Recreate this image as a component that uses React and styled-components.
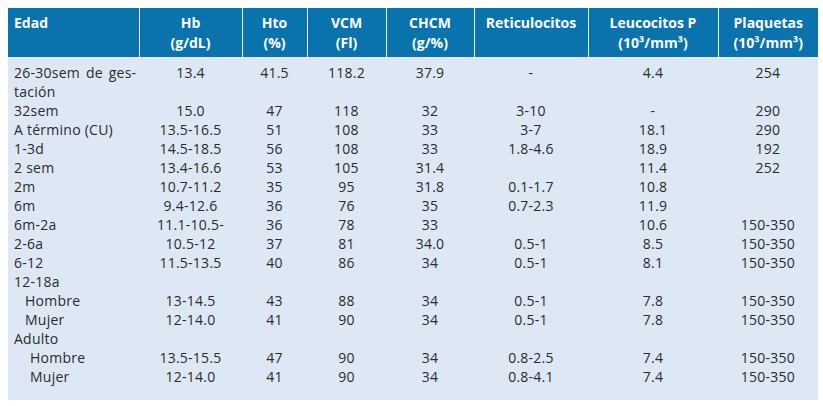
import React from "react";
import styled, { createGlobalStyle } from "styled-components";

const Global = createGlobalStyle`
  html, body { margin: 0; padding: 0; background: #ffffff; }
  body { padding: 8px 0 0 8px; font-family: "Open Sans", "DejaVu Sans", sans-serif; }
`;

const Table = styled.table`
  border-collapse: collapse;
  table-layout: fixed;
  width: 810px;
  background: #dde8f4;
  color: #2b2b2b;
  font-family: "Open Sans", "DejaVu Sans", sans-serif;
  font-size: 14px;
`;

const HeadCell = styled.th`
  background: #0a72ad;
  color: #ffffff;
  font-weight: 700;
  font-size: 14px;
  line-height: 20px;
  padding: 5px 6px 4px;
  text-align: ${(p) => (p.$left ? "left" : "center")};
  vertical-align: top;
  border-left: ${(p) => (p.$left ? "none" : "1px solid #e6eef6")};
`;

const Cell = styled.td`
  padding: 0 6px 0 ${(p) => 6 + (p.$indent || 0)}px;
  line-height: 19px;
  height: 19px;
  letter-spacing: 0.25px;
  text-align: ${(p) => (p.$left ? "left" : "center")};
  vertical-align: top;
  white-space: nowrap;
`;

const Row = styled.tr`
  & > td { padding-top: ${(p) => (p.$first ? 5.5 : 0)}px; padding-bottom: ${(p) => (p.$last ? 14.5 : 0)}px; }
`;

const Justified = styled.span`
  display: block;
  word-spacing: 2px;
`;

const widths = [131, 103, 65, 79, 88, 114, 130, 100];

const rows = [
  ["26-30sem de ges-|tación", "13.4", "41.5", "118.2", "37.9", "-", "4.4", "254"],
  ["32sem", "15.0", "47", "118", "32", "3-10", "-", "290"],
  ["A término (CU)", "13.5-16.5", "51", "108", "33", "3-7", "18.1", "290"],
  ["1-3d", "14.5-18.5", "56", "108", "33", "1.8-4.6", "18.9", "192"],
  ["2 sem", "13.4-16.6", "53", "105", "31.4", "", "11.4", "252"],
  ["2m", "10.7-11.2", "35", "95", "31.8", "0.1-1.7", "10.8", ""],
  ["6m", "9.4-12.6", "36", "76", "35", "0.7-2.3", "11.9", ""],
  ["6m-2a", "11.1-10.5-", "36", "78", "33", "", "10.6", "150-350"],
  ["2-6a", "10.5-12", "37", "81", "34.0", "0.5-1", "8.5", "150-350"],
  ["6-12", "11.5-13.5", "40", "86", "34", "0.5-1", "8.1", "150-350"],
  ["12-18a", "", "", "", "", "", "", ""],
  ["Hombre", "13-14.5", "43", "88", "34", "0.5-1", "7.8", "150-350", 11],
  ["Mujer", "12-14.0", "41", "90", "34", "0.5-1", "7.8", "150-350", 11],
  ["Adulto", "", "", "", "", "", "", ""],
  ["Hombre", "13.5-15.5", "47", "90", "34", "0.8-2.5", "7.4", "150-350", 16],
  ["Mujer", "12-14.0", "41", "90", "34", "0.8-4.1", "7.4", "150-350", 16],
];

const headers = [
  ["Edad"],
  ["Hb", "(g/dL)"],
  ["Hto", "(%)"],
  ["VCM", "(Fl)"],
  ["CHCM", "(g/%)"],
  ["Reticulocitos"],
  ["Leucocitos P", "(10³/mm³)"],
  ["Plaquetas", "(10³/mm³)"],
];

export default function App() {
  return (
    <>
      <Global />
      <Table>
        <colgroup>
          {widths.map((w, i) => (
            <col key={i} style={{ width: w }} />
          ))}
        </colgroup>
        <thead>
          <tr>
            {headers.map((h, i) => (
              <HeadCell key={i} $left={i === 0}>
                {h.map((line, j) => (
                  <div key={j}>{line}</div>
                ))}
              </HeadCell>
            ))}
          </tr>
        </thead>
        <tbody>
          {rows.map((r, ri) => (
            <Row key={ri} $first={ri === 0} $last={ri === rows.length - 1}>
              {r.slice(0, 8).map((c, ci) =>
                ci === 0 ? (
                  <Cell key={ci} $left $indent={r[8]}>
                    {c.includes("|") ? (
                      <>
                        <Justified>{c.split("|")[0]}</Justified>
                        <div>{c.split("|")[1]}</div>
                      </>
                    ) : (
                      c
                    )}
                  </Cell>
                ) : (
                  <Cell key={ci}>{c}</Cell>
                )
              )}
            </Row>
          ))}
        </tbody>
      </Table>
    </>
  );
}
